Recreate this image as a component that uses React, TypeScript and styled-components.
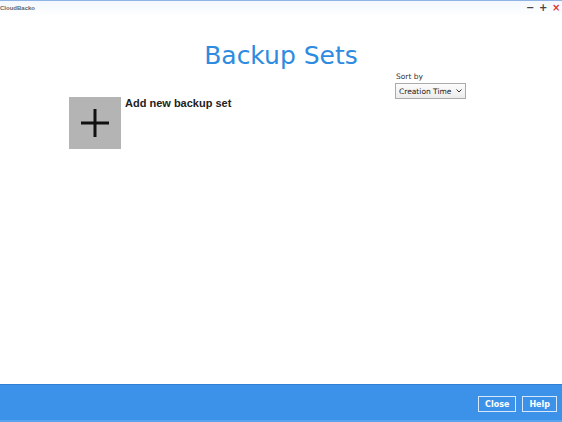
import React from "react";
import styled, { createGlobalStyle } from "styled-components";

const Global = createGlobalStyle`
  html, body { margin: 0; padding: 0; background: #fff; }
  body { font-family: "DejaVu Sans", Verdana, sans-serif; }
  #root { width: 562px; height: 422px; }
`;

const Window = styled.div`
  width: 562px;
  height: 422px;
  display: flex;
  flex-direction: column;
  background: #fff;
  overflow: hidden;
`;

const TitleBar = styled.div`
  height: 14px;
  flex: none;
  display: flex;
  align-items: center;
  justify-content: space-between;
  border-top: 1px solid #8fb5e6;
  background: linear-gradient(#f4f8fd, #fdfeff);
  padding: 0 2px 0 0;
`;

const TitleText = styled.span`
  font-family: "Liberation Sans", Arial, sans-serif;
  font-size: 6px;
  color: #666;
  font-weight: bold;
`;

const Controls = styled.div`
  display: flex;
  align-items: center;
  gap: 5px;
`;

const Ctrl = styled.span<{ $color: string }>`
  font-size: 10px;
  font-weight: bold;
  line-height: 10px;
  color: ${(p) => p.$color};
  width: 8px;
  text-align: center;
`;

const Body = styled.div`
  flex: 1;
  display: flex;
  flex-direction: column;
`;

const Heading = styled.h1`
  margin: 26px 0 0 0;
  text-align: center;
  font-family: "DejaVu Sans", Verdana, sans-serif;
  font-weight: normal;
  font-size: 25px;
  line-height: 30px;
  color: #2e8be0;
`;

const Row = styled.div`
  display: flex;
  padding-left: 69px;
  padding-right: 96px;
  justify-content: space-between;
  align-items: flex-start;
`;

const AddItem = styled.div`
  display: flex;
  gap: 4px;
  margin-top: 26px;
`;

const Tile = styled.div`
  width: 52px;
  height: 52px;
  background: #b4b4b4;
  display: flex;
  align-items: center;
  justify-content: center;
`;

const AddLabel = styled.span`
  font-family: "Liberation Sans", Arial, sans-serif;
  font-size: 11px;
  font-weight: bold;
  color: #222;
  line-height: 12px;
`;

const SortBox = styled.div`
  display: flex;
  flex-direction: column;
  gap: 1px;
  margin-top: 1px;
`;

const SortLabel = styled.span`
  font-family: "DejaVu Sans", Verdana, sans-serif;
  font-size: 7.5px;
  line-height: 10px;
  color: #333;
  padding-left: 1px;
`;

const Select = styled.div`
  width: 71px;
  height: 16px;
  border: 1px solid #aaa;
  background: linear-gradient(#fcfcfc, #ececec);
  display: flex;
  align-items: center;
  justify-content: space-between;
  padding: 0 3px;
  box-sizing: border-box;
  font-family: "DejaVu Sans", Verdana, sans-serif;
  font-size: 7.5px;
  white-space: nowrap;
  color: #222;
`;

const Footer = styled.div`
  height: 38px;
  flex: none;
  background: #3c91e8;
  border-top: 1px solid #2f7fd4;
  border-bottom: 2px solid #5aa3ee;
  box-sizing: border-box;
  display: flex;
  align-items: center;
  justify-content: flex-end;
  gap: 6px;
  padding: 0 5px 2px 0;
`;

const Btn = styled.button`
  height: 16px;
  padding: 0 6px;
  background: transparent;
  border: 1px solid #d6e8fb;
  color: #fff;
  font-family: "DejaVu Sans", Verdana, sans-serif;
  font-weight: bold;
  font-size: 8px;
  margin-top: 5px;
`;

export default function App() {
  return (
    <>
      <Global />
      <Window>
        <TitleBar>
          <TitleText>CloudBacko</TitleText>
          <Controls>
            <Ctrl $color="#444">−</Ctrl>
            <Ctrl $color="#444">+</Ctrl>
            <Ctrl $color="#d33">×</Ctrl>
          </Controls>
        </TitleBar>
        <Body>
          <Heading>Backup Sets</Heading>
          <Row>
            <AddItem>
              <Tile>
                <svg width="30" height="30" viewBox="0 0 30 30">
                  <rect x="13.5" y="1" width="3" height="28" fill="#111" />
                  <rect x="1" y="13.5" width="28" height="3" fill="#111" />
                </svg>
              </Tile>
              <AddLabel>Add new backup set</AddLabel>
            </AddItem>
            <SortBox>
              <SortLabel>Sort by</SortLabel>
              <Select>
                <span>Creation Time</span>
                <svg width="6" height="4" viewBox="0 0 6 4">
                  <path d="M0.5 0.5 L3 3 L5.5 0.5" stroke="#333" fill="none" strokeWidth="1" />
                </svg>
              </Select>
            </SortBox>
          </Row>
        </Body>
        <Footer>
          <Btn>Close</Btn>
          <Btn>Help</Btn>
        </Footer>
      </Window>
    </>
  );
}
